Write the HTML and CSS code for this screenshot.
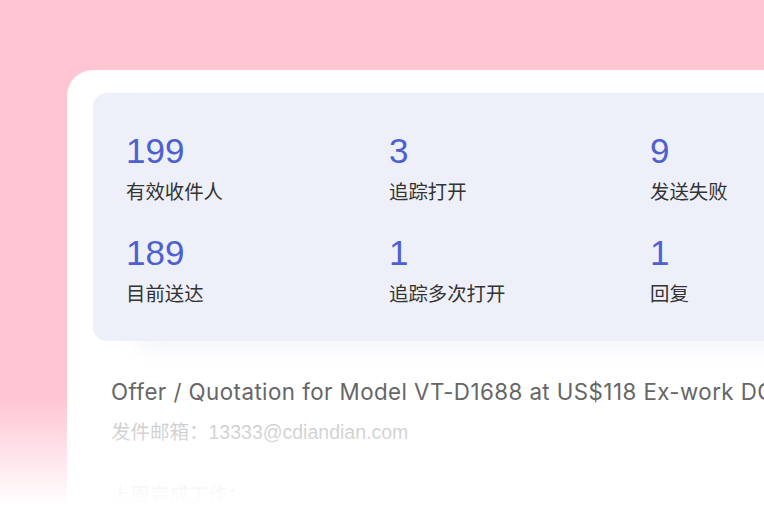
FILE: index.html
```html
<!DOCTYPE html>
<html lang="zh-CN">
<head>
    <meta charset="UTF-8">
    <meta name="viewport" content="width=device-width, initial-scale=1.0">
    <title>邮件追踪</title>
    <link rel="stylesheet" href="styles.css">
</head>
<body>
    <div class="stage">
        <div class="card">
            <div class="stats">
                <div class="stat">
                    <div class="num">199</div>
                    <div class="label">有效收件人</div>
                </div>
                <div class="stat">
                    <div class="num">3</div>
                    <div class="label">追踪打开</div>
                </div>
                <div class="stat">
                    <div class="num">9</div>
                    <div class="label">发送失败</div>
                </div>
                <div class="stat">
                    <div class="num">189</div>
                    <div class="label">目前送达</div>
                </div>
                <div class="stat">
                    <div class="num">1</div>
                    <div class="label">追踪多次打开</div>
                </div>
                <div class="stat">
                    <div class="num">1</div>
                    <div class="label">回复</div>
                </div>
            </div>
            <div class="mail">
                <div class="subject">Offer / Quotation for Model VT-D1688 at US$118 Ex-work DG</div>
                <div class="sender">发件邮箱：13333@cdiandian.com</div>
                <div class="body">上周完成工作：</div>
            </div>
        </div>
        <div class="fade"></div>
    </div>
</body>
</html>
```

FILE: styles.css
```css
html, body {
    margin: 0;
    padding: 0;
}
body {
    background: #ffc5d3;
    font-family: "Liberation Sans", "Noto Sans CJK SC", sans-serif;
    overflow: hidden;
}
.stage {
    position: relative;
    width: 764px;
    height: 532px;
    overflow: hidden;
    padding: 70px 0 0 67px;
    box-sizing: border-box;
}
.card {
    background: #fff;
    width: 760px;
    height: 520px;
    border-radius: 26px 0 0 0;
    padding: 23px 0 0 26px;
    box-sizing: border-box;
}
.stats {
    background: #edf0f9;
    border-radius: 14px 0 0 14px;
    height: 248px;
    padding: 38px 0 0 33px;
    box-sizing: border-box;
    display: grid;
    grid-template-columns: 263px 261px 200px;
    grid-auto-rows: 102px;
    box-shadow: 40px 12px 22px -6px rgba(225, 228, 240, 0.45);
}
.num {
    font-size: 35px;
    line-height: 40px;
    color: #4d5fd1;
}
.label {
    margin-top: 8px;
    font-family: "Noto Sans CJK SC", sans-serif;
    font-size: 19.4px;
    line-height: 24px;
    color: #333;
}
.mail {
    padding: 37px 0 0 18px;
}
.subject {
    font-family: "Inter", "Liberation Sans", sans-serif;
    font-size: 22.3px;
    line-height: 28px;
    letter-spacing: 0.45px;
    color: #666;
    white-space: nowrap;
}
.sender, .body {
    font-family: "Liberation Sans", "Noto Sans CJK SC", sans-serif;
    font-size: 19.5px;
    line-height: 26px;
}
.sender {
    margin-top: 13px;
    color: #bdbdbd;
}
.body {
    margin-top: 37px;
    color: #c8c8c8;
}
.fade {
    position: absolute;
    left: 0;
    right: 0;
    bottom: 0;
    height: 135px;
    background: linear-gradient(rgba(255, 255, 255, 0), #fff 80%);
}
```
